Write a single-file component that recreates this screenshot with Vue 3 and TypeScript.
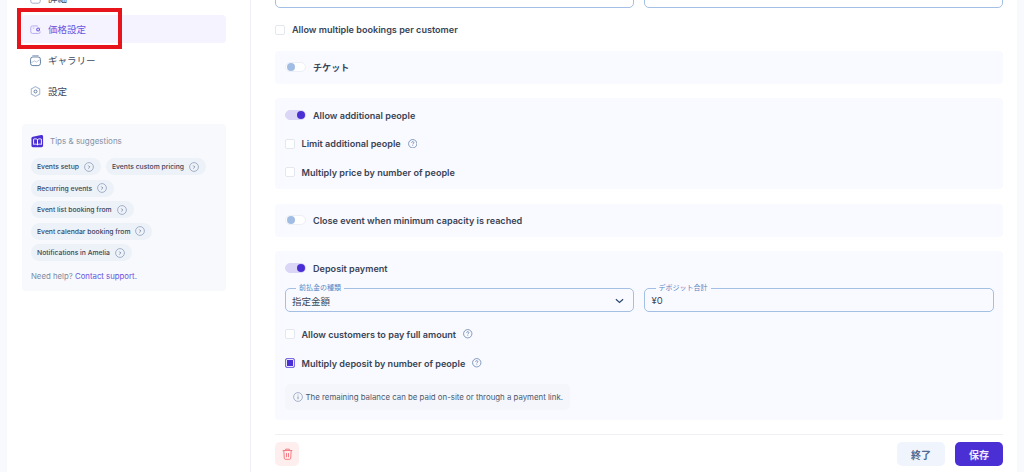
<template>
  <div class="page">
    <aside class="sidebar">
      <nav class="nav">
        <div
          v-for="item in navItems"
          :key="item.label"
          class="nav-item"
          :class="{ active: item.active }"
        >
          <svg class="nav-icon" viewBox="0 0 14 14" fill="none" v-html="item.icon"></svg>
          <span>{{ item.label }}</span>
        </div>
      </nav>

      <section class="tips">
        <div class="tips-head">
          <svg class="book" viewBox="0 0 14 14">
            <path d="M2 2.500 11 .6c1-.2 2 .5 2 1.500V12c0 .9-.7 1.600-1.600 1.600H2.100C1.200 13.600.5 12.900.5 12V4c0-.8.700-1.300 1.500-1.500z" fill="#4a30d4" />
            <path d="M2.800 5c1.500-.5 3.200-.4 4.200.4v5.700c-1-.8-2.700-.9-4.200-.4zM7 5.400c1-.8 2.700-.9 4.200-.4v5.700c-1.500-.5-3.200-.4-4.200.4z" fill="none" stroke="#fff" stroke-width="1" />
          </svg>
          <span>Tips &amp; suggestions</span>
        </div>
        <div class="chips">
          <div v-for="tip in tips" :key="tip" class="chip">
            <span>{{ tip }}</span>
            <svg class="chip-arrow" viewBox="0 0 12 12" fill="none">
              <circle cx="6" cy="6" r="5.300" stroke="#8a9ab8" stroke-width="0.900" />
              <path d="M5.200 4.300 6.900 6 5.200 7.700" stroke="#5d6b85" stroke-width="0.900" />
            </svg>
          </div>
        </div>
        <p class="help">Need help? <a>Contact support.</a></p>
      </section>
    </aside>
    <div class="red-box"></div>

    <main class="main">
      <div class="field-row top-row">
        <div class="field"></div>
        <div class="field"></div>
      </div>

      <label class="check-row first-check">
        <span class="check"></span>
        <span>Allow multiple bookings per customer</span>
      </label>

      <section class="panel slim">
        <div class="switch-row">
          <span class="switch"></span>
          <span>チケット</span>
        </div>
      </section>

      <section class="panel people">
        <div class="switch-row">
          <span class="switch on"></span>
          <span>Allow additional people</span>
        </div>
        <label class="check-row">
          <span class="check"></span>
          <span>Limit additional people</span>
          <svg class="help-icon" viewBox="0 0 10 10" fill="none" v-html="questionIcon"></svg>
        </label>
        <label class="check-row">
          <span class="check"></span>
          <span>Multiply price by number of people</span>
        </label>
      </section>

      <section class="panel slim">
        <div class="switch-row">
          <span class="switch"></span>
          <span>Close event when minimum capacity is reached</span>
        </div>
      </section>

      <section class="panel deposit">
        <div class="switch-row">
          <span class="switch on"></span>
          <span>Deposit payment</span>
        </div>
        <div class="field-row deposit-fields">
          <div class="field">
            <span class="legend">前払金の種類</span>
            <span class="value">指定金額</span>
            <svg class="chevron" viewBox="0 0 10 6" fill="none">
              <path d="M1 1 5 4.600 9 1" stroke="#2f4a6d" stroke-width="1.400" />
            </svg>
          </div>
          <div class="field">
            <span class="legend">デポジット合計</span>
            <span class="value">¥0</span>
          </div>
        </div>
        <label class="check-row full-row">
          <span class="check"></span>
          <span>Allow customers to pay full amount</span>
          <svg class="help-icon" viewBox="0 0 10 10" fill="none" v-html="questionIcon"></svg>
        </label>
        <label class="check-row multiply-row">
          <span class="check checked"></span>
          <span>Multiply deposit by number of people</span>
          <svg class="help-icon" viewBox="0 0 10 10" fill="none" v-html="questionIcon"></svg>
        </label>
        <div class="notice">
          <svg class="notice-icon" viewBox="0 0 10 10" fill="none">
            <circle cx="5" cy="5" r="4.400" stroke="#8296b5" stroke-width="0.700" />
            <path d="M5 4.400v2.800M5 2.600v.8" stroke="#6c7f9e" stroke-width="0.800" />
          </svg>
          <span>The remaining balance can be paid on-site or through a payment link.</span>
        </div>
      </section>

      <footer class="footer">
        <button class="trash" aria-label="delete">
          <svg viewBox="0 0 12 13" fill="none" stroke="#f2727a" stroke-width="1">
            <path d="M.8 2.700h10.400M4 2.500V1.200h4v1.300M2 2.800l.5 8.300c0 .7.500 1.200 1.200 1.200h4.600c.7 0 1.200-.5 1.200-1.200l.5-8.300M4.900 5.500v4.500M7.100 5.500v4.500" />
          </svg>
        </button>
        <div class="actions">
          <button class="btn ghost">終了</button>
          <button class="btn primary">保存</button>
        </div>
      </footer>
    </main>
  </div>
</template>

<script setup lang="ts">
const navItems = [
  {
    label: '詳細',
    active: false,
    icon: `<rect x="1" y="1" width="12" height="12" rx="2.500" stroke="#8a9cc0" stroke-width="1"/><path d="M4 5h6M4 8h6" stroke="#8a9cc0" stroke-width="1"/>`
  },
  {
    label: '価格設定',
    active: true,
    icon: `<path d="M10 2.500H3a2 2 0 0 0-2 2v5.500a2 2 0 0 0 2 2h8a2 2 0 0 0 2-2V9.500M13 4.500V4.300" stroke="#b3a8ee" stroke-width="1.200"/><path d="M3.500 5.200h2" stroke="#b3a8ee" stroke-width="1.100"/><circle cx="10.300" cy="7" r="1.800" stroke="#6b55e0" stroke-width="1.300"/>`
  },
  {
    label: 'ギャラリー',
    active: false,
    icon: `<rect x="0.700" y="2.500" width="12.600" height="11" rx="3" stroke="#5f7a9f" stroke-width="1.200"/><path d="M3 .8h8" stroke="#a6b6d0" stroke-width="1.500"/><path d="M1.500 10 5.500 7.500l2.500 1.500 4.500-3" stroke="#a6b6d0" stroke-width="1"/>`
  },
  {
    label: '設定',
    active: false,
    icon: `<path d="M7 .8 12.400 3.900v6.200L7 13.200 1.600 10.100V3.900z" stroke="#a6b6d0" stroke-width="1.300" stroke-linejoin="round"/><circle cx="7" cy="7" r="1.900" stroke="#5f7a9f" stroke-width="1.200"/>`
  }
]

const tips = [
  'Events setup',
  'Events custom pricing',
  'Recurring events',
  'Event list booking from',
  'Event calendar booking from',
  'Notifications in Amelia'
]

const questionIcon = `<circle cx="5" cy="5" r="4.400" stroke="#5f7ca8" stroke-width="0.800"/><path d="M3.800 3.900c0-.7.500-1.100 1.200-1.100s1.200.4 1.200 1.100c0 .9-1.200.9-1.200 1.800M5 6.600v.7" stroke="#5f7ca8" stroke-width="0.800"/>`
</script>

<style>
html,
body {
  margin: 0;
  overflow: hidden;
}
</style>

<style scoped>
.page {
  position: relative;
  display: flex;
  width: 1024px;
  height: 472px;
  overflow: hidden;
  box-sizing: border-box;
  padding: 0 7px;
  background: #f8f9fd;
  font-family: Inter, "Noto Sans CJK JP", sans-serif;
  color: #303a4d;
}

.sidebar {
  width: 244px;
  flex-shrink: 0;
  box-sizing: border-box;
  padding: 0 24px 0 15px;
  background: #fff;
  border-right: 1px solid #eef0f5;
}

.nav {
  display: flex;
  flex-direction: column;
  gap: 3px;
  margin-top: -16px;
}

.nav-item {
  display: flex;
  align-items: center;
  gap: 7px;
  box-sizing: border-box;
  height: 28px;
  padding: 0 0 0 8px;
  border-radius: 4px;
  font-size: 9.500px;
  color: #3c4a60;
}

.nav-item.active {
  background: #f5f3ff;
  color: #6a55e0;
}

.nav-icon {
  width: 11px;
  height: 11px;
  overflow: visible;
}

.tips {
  box-sizing: border-box;
  height: 167px;
  margin-top: 19px;
  padding: 10px 10px 0 9px;
  border-radius: 4px;
  background: #f7f9fd;
}

.tips-head {
  display: flex;
  align-items: center;
  gap: 6px;
  font-size: 8px;
  color: #8491a5;
}

.book {
  width: 13px;
  height: 14px;
}

.chips {
  display: flex;
  flex-wrap: wrap;
  gap: 4.500px 5px;
  margin-top: 10px;
}

.chip {
  display: flex;
  align-items: center;
  gap: 5px;
  height: 17px;
  padding: 0 7px 0 6px;
  border-radius: 9px;
  background: #edf2f9;
  font-size: 6.800px;
  font-weight: 500;
  color: #3a465b;
}

.chip-arrow {
  width: 10px;
  height: 10px;
}

.help {
  margin: 10px 0 0;
  font-size: 7.800px;
  color: #7c8aa0;
}

.help a {
  color: #6a55e0;
}

.red-box {
  position: absolute;
  left: 17px;
  top: 8px;
  width: 105px;
  height: 41px;
  box-sizing: border-box;
  border: 4px solid #e8141c;
}

.main {
  flex: 1;
  min-width: 0;
  box-sizing: border-box;
  display: flex;
  flex-direction: column;
  justify-content: flex-end;
  height: 472px;
  padding: 0 14px 6px 24px;
  background: #fff;
}

.field-row {
  display: flex;
  gap: 10px;
  flex-shrink: 0;
}

.field {
  position: relative;
  flex: 1;
  display: flex;
  align-items: center;
  box-sizing: border-box;
  height: 24px;
  padding: 1px 6.500px 0;
  border: 1px solid #a3bfe3;
  border-radius: 5px;
  font-size: 9.500px;
  color: #3d4756;
}

.top-row {
  margin-bottom: 15px;
}

.legend {
  position: absolute;
  left: 10.500px;
  top: -6px;
  padding: 0 3px;
  background: #f9faff;
  font-size: 7px;
  line-height: 9px;
  color: #5a85c2;
}

.chevron {
  width: 9px;
  height: 6px;
  margin-left: auto;
  margin-right: 3px;
}

.check-row {
  display: flex;
  align-items: center;
  gap: 7px;
  flex-shrink: 0;
  height: 14px;
  font-size: 9.100px;
  font-weight: 600;
  color: #3a4457;
}

.check {
  width: 8px;
  height: 8px;
  flex-shrink: 0;
  border: 1px solid #e3e8f0;
  border-radius: 2px;
  background: #fff;
}

.check.checked {
  border-color: #7d6ce6;
  background: #4a30d4;
  box-shadow: inset 0 0 0 1px #e8e5fb;
}

.help-icon {
  width: 9.500px;
  height: 9.500px;
}

.first-check {
  margin-bottom: 14px;
}

.panel {
  flex-shrink: 0;
  box-sizing: border-box;
  padding: 0 9.500px;
  border-radius: 4px;
  background: #f9faff;
}

.slim {
  display: flex;
  align-items: center;
  height: 33px;
  margin-bottom: 14.500px;
}

.people {
  display: flex;
  flex-direction: column;
  gap: 14.500px;
  height: 91px;
  padding-top: 10px;
  margin-bottom: 14.500px;
}

.deposit {
  height: 169px;
  padding-top: 10px;
}

.switch-row {
  display: flex;
  align-items: center;
  gap: 7.500px;
  height: 14px;
  font-size: 9.100px;
  font-weight: 600;
  color: #3a4457;
}

.switch {
  position: relative;
  width: 21px;
  height: 10px;
  box-sizing: border-box;
  flex-shrink: 0;
  border: 1px solid #eceff6;
  border-radius: 5px;
  background: #fff;
}

.switch::after {
  content: "";
  position: absolute;
  left: 1px;
  top: 0;
  width: 8px;
  height: 8px;
  border-radius: 50%;
  background: #a2bde4;
}

.switch.on {
  border-color: #dbd6f5;
  background: #dbd6f5;
}

.switch.on::after {
  left: auto;
  right: 0;
  background: #4a30d4;
}

.deposit-fields {
  margin-top: 13px;
}

.full-row {
  margin-top: 15px;
}

.multiply-row {
  margin-top: 15px;
}

.notice {
  display: flex;
  align-items: center;
  gap: 3px;
  height: 26px;
  width: fit-content;
  margin-top: 14px;
  padding: 0 7px 0 8px;
  border-radius: 5px;
  background: #f5f6fb;
  font-size: 7.850px;
  color: #4c586c;
}

.notice-icon {
  width: 10px;
  height: 10px;
}

.footer {
  display: flex;
  justify-content: space-between;
  flex-shrink: 0;
  margin-top: 14px;
  padding-top: 7px;
  border-top: 1px solid #eff1f5;
}

.trash {
  display: flex;
  align-items: center;
  justify-content: center;
  width: 24px;
  height: 24px;
  padding: 0;
  border: 0;
  border-radius: 5px;
  background: #ffeeee;
}

.trash svg {
  width: 11px;
  height: 12px;
}

.actions {
  display: flex;
  gap: 10px;
}

.btn {
  width: 48px;
  height: 24px;
  padding: 0;
  border: 0;
  border-radius: 5px;
  font-family: inherit;
  font-size: 10px;
  font-weight: 600;
}

.ghost {
  background: #f0f5fd;
  color: #4f6a8f;
}

.primary {
  background: #4a30d4;
  color: #eeeaff;
}
</style>
